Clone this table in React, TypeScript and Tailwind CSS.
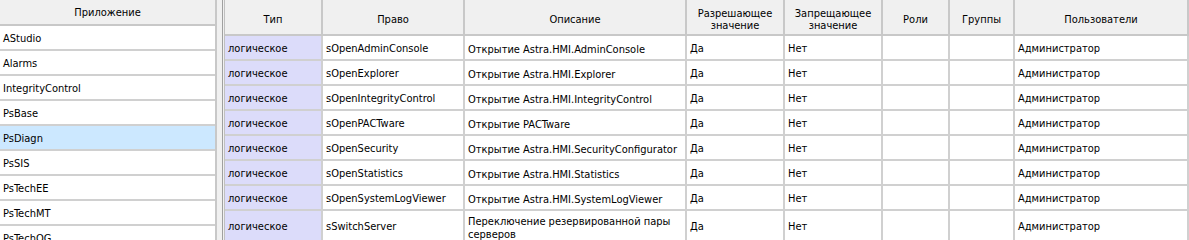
const apps = ["AStudio", "Alarms", "IntegrityControl", "PsBase", "PsDiagn", "PsSIS", "PsTechEE", "PsTechMT", "PsTechOG"];

const columns = [
  { title: "Тип", w: "w-[98px]" },
  { title: "Право", w: "w-[142px]" },
  { title: "Описание", w: "w-[222px]" },
  { title: "Разрешающее значение", w: "w-[98px]" },
  { title: "Запрещающее значение", w: "w-[98px]" },
  { title: "Роли", w: "w-[67px]" },
  { title: "Группы", w: "w-[65px]" },
  { title: "Пользователи", w: "w-[174px]" },
];

const rights = [
  { name: "sOpenAdminConsole", desc: "Открытие Astra.HMI.AdminConsole" },
  { name: "sOpenExplorer", desc: "Открытие Astra.HMI.Explorer" },
  { name: "sOpenIntegrityControl", desc: "Открытие Astra.HMI.IntegrityControl" },
  { name: "sOpenPACTware", desc: "Открытие PACTware" },
  { name: "sOpenSecurity", desc: "Открытие Astra.HMI.SecurityConfigurator" },
  { name: "sOpenStatistics", desc: "Открытие Astra.HMI.Statistics" },
  { name: "sOpenSystemLogViewer", desc: "Открытие Astra.HMI.SystemLogViewer" },
  { name: "sSwitchServer", desc: "Переключение резервированной пары серверов", tall: true },
];

function AppList() {
  return (
    <div className="flex w-[217px] shrink-0 flex-col border-r-2 border-[#c8c8c8] bg-white">
      <div className="flex h-[26px] shrink-0 items-center justify-center border-b-2 border-[#c8c8c8] bg-[#f0f0f0] pt-[2px]">
        Приложение
      </div>
      {apps.map((app) => (
        <div
          key={app}
          className={`flex h-[25px] shrink-0 items-center border-b-2 border-[#d0d0d0] pl-[3px] pt-[3px] ${app === "PsDiagn" ? "bg-[#cce8ff]" : "bg-white"}`}
        >
          {app}
        </div>
      ))}
    </div>
  );
}

function Cell({ w, className = "", children }: { w: string; className?: string; children?: React.ReactNode }) {
  return (
    <div className={`flex shrink-0 items-center border-r-2 border-[#d0d0d0] px-[3px] pt-[3px] ${w} ${className}`}>
      {children}
    </div>
  );
}

function RightsTable() {
  return (
    <div className="flex flex-1 flex-col border-l border-[#c0c0c0] bg-white">
      <div className="flex h-[36px] shrink-0 border-b-2 border-[#c8c8c8] bg-[#f0f0f0]">
        {columns.map((col) => (
          <div
            key={col.title}
            className={`flex shrink-0 items-center justify-center border-r-2 border-[#c8c8c8] px-1 pt-[5px] text-center leading-[12px] ${col.w}`}
          >
            {col.title}
          </div>
        ))}
      </div>
      {rights.map((r) => (
        <div key={r.name} className={`flex shrink-0 border-b-2 border-[#d0d0d0] ${r.tall ? "h-[31px]" : "h-[25px]"}`}>
          <Cell w={columns[0].w} className="bg-[#dcdcfa]">логическое</Cell>
          <Cell w={columns[1].w}>{r.name}</Cell>
          <Cell w={columns[2].w} className={r.tall ? "pt-[5px] leading-[13px]" : "leading-[13px]"}>{r.desc}</Cell>
          <Cell w={columns[3].w}>Да</Cell>
          <Cell w={columns[4].w}>Нет</Cell>
          <Cell w={columns[5].w} />
          <Cell w={columns[6].w} />
          <Cell w={columns[7].w}>Администратор</Cell>
        </div>
      ))}
    </div>
  );
}

export default function App() {
  return (
    <div
      className="flex h-[240px] w-[1189px] overflow-hidden bg-[#f0f0f0] text-[11px] text-black"
      style={{ fontFamily: '"DejaVu Sans Condensed", "DejaVu Sans", sans-serif' }}
    >
      <AppList />
      <div className="w-[5px] shrink-0 bg-[#f0f0f0]" />
      <div className="w-px shrink-0 bg-[#a0a0a0]" />
      <div className="w-px shrink-0 bg-[#f0f0f0]" />
      <RightsTable />
    </div>
  );
}
